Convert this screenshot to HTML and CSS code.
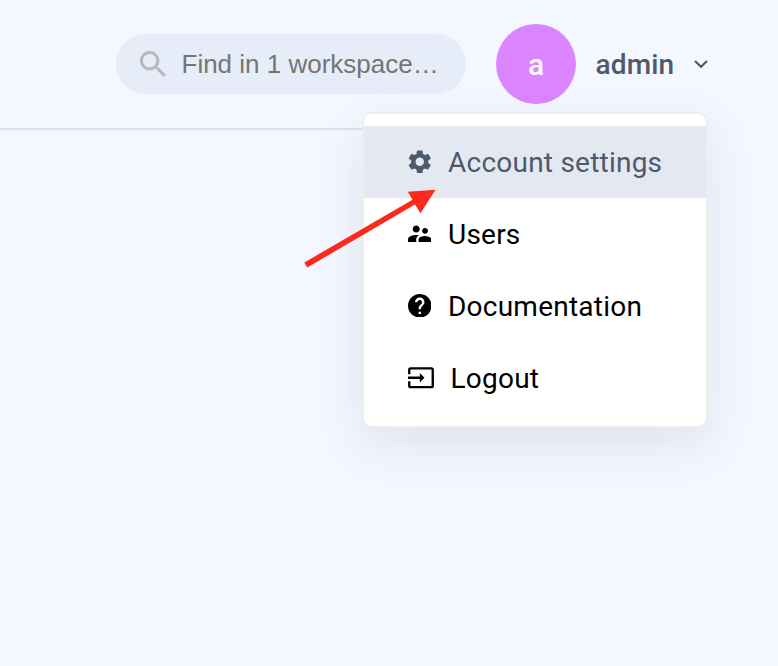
FILE: index.html
```html
<!DOCTYPE html>
<html lang="en">
<head>
<meta charset="utf-8">
<title>Workspace</title>
<link rel="stylesheet" href="styles.css">
</head>
<body>
<header class="topbar">
  <div class="search">
    <svg class="search-icon" viewBox="3 3 17.5 17.5"><path d="M15.5 14h-.79l-.28-.27C15.41 12.59 16 11.11 16 9.5 16 5.91 13.09 3 9.5 3S3 5.91 3 9.5 5.91 16 9.5 16c1.61 0 3.09-.59 4.23-1.57l.27.28v.79l5 4.99L20.49 19l-4.99-5zm-6 0C7.01 14 5 11.99 5 9.5S7.01 5 9.5 5 14 7.01 14 9.5 11.99 14 9.5 14z"/></svg>
    <span class="search-text">Find in 1 workspace…</span>
  </div>
  <div class="account">
    <div class="avatar"><span>a</span></div>
    <span class="name">admin</span>
    <svg class="chevron" viewBox="0 0 16 10"><path d="M2 2l6 5.800 6-5.800"/></svg>
    <nav class="menu">
      <a class="item active">
        <svg class="icon" viewBox="2 2 20 20"><path d="M19.140 12.940c.04-.3.06-.61.06-.94 0-.32-.02-.64-.07-.94l2.030-1.580c.18-.14.23-.41.12-.61l-1.920-3.320c-.12-.22-.37-.29-.59-.22l-2.390.96c-.5-.38-1.030-.7-1.620-.94L14.400 2.810c-.04-.24-.24-.41-.48-.41h-3.840c-.24 0-.43.17-.47.41L9.250 5.350C8.660 5.590 8.120 5.920 7.630 6.290L5.240 5.330c-.22-.08-.47 0-.59.22L2.740 8.870c-.12.21-.08.47.12.61l2.030 1.580c-.05.3-.09.63-.09.94s.02.64.07.94l-2.030 1.580c-.18.14-.23.41-.12.61l1.920 3.320c.12.22.37.29.59.22l2.390-.96c.5.38 1.030.7 1.620.94l.36 2.540c.05.24.24.41.48.41h3.840c.24 0 .44-.17.47-.41l.36-2.540c.59-.24 1.130-.56 1.620-.94l2.390.96c.22.08.47 0 .59-.22l1.920-3.320c.12-.22.07-.47-.12-.61l-2.010-1.580zM12 15.600c-1.980 0-3.600-1.620-3.600-3.600s1.620-3.600 3.600-3.600 3.600 1.620 3.600 3.600-1.620 3.600-3.600 3.600z"/></svg>
        <span>Account settings</span>
      </a>
      <a class="item">
        <svg class="icon" viewBox="2 2 20 20"><path d="M16.500 12c1.380 0 2.490-1.120 2.490-2.500S17.880 7 16.500 7 14 8.120 14 9.500s1.120 2.500 2.500 2.500zM9 11c1.660 0 2.990-1.340 2.990-3S10.660 5 9 5 6 6.340 6 8s1.340 3 3 3zm7.500 3c-1.830 0-5.500.92-5.500 2.750V19h11v-2.250c0-1.830-3.670-2.750-5.500-2.750zM9 13c-2.330 0-7 1.170-7 3.500V19h7v-2.250c0-.85.33-2.340 2.370-3.470C10.500 13.100 9.660 13 9 13z"/></svg>
        <span>Users</span>
      </a>
      <a class="item">
        <svg class="icon" viewBox="2 2 20 20"><path d="M12 2C6.480 2 2 6.480 2 12s4.480 10 10 10 10-4.480 10-10S17.520 2 12 2zm1 17h-2v-2h2v2zm2.070-7.750l-.9.920C13.450 12.900 13 13.500 13 15h-2v-.5c0-1.100.45-2.100 1.170-2.830l1.240-1.260c.37-.36.59-.86.59-1.410 0-1.100-.9-2-2-2s-2 .9-2 2H8c0-2.210 1.790-4 4-4s4 1.790 4 4c0 .88-.36 1.680-.93 2.250z"/></svg>
        <span>Documentation</span>
      </a>
      <a class="item">
        <svg class="icon icon-wide" viewBox="1 2 22 20"><path d="M21 3.010H3c-1.100 0-2 .9-2 2V9h2V4.990h18v14.030H3V15H1v4.010c0 1.100.9 1.980 2 1.980h18c1.100 0 2-.88 2-1.980v-14c0-1.110-.9-2-2-2zM11 16l4-4-4-4v3H1v2h10v3z"/></svg>
        <span>Logout</span>
      </a>
    </nav>
  </div>
</header>
<svg class="pointer" viewBox="0 0 140 86"><path d="M4.300 77.500L112.500 14.800l-4.700-8.100L135.500 4.800l-15 23.500-5.500-8.700L7.300 82.500z"/></svg>
</body>
</html>
```
FILE: styles.css
```css
* { box-sizing: border-box; }

body {
  margin: 0;
  min-height: 666px;
  background: #f4f7ff;
  font-family: Roboto, "Liberation Sans", sans-serif;
  overflow: hidden;
}

svg { display: block; flex: none; fill: currentColor; }

.topbar {
  display: flex;
  align-items: flex-start;
  justify-content: flex-end;
  gap: 30px;
  height: 130px;
  margin-right: 70px;
  padding-top: 24px;
  border-bottom: 2px solid #dde2ea;
}

.search {
  display: flex;
  align-items: center;
  gap: 16px;
  width: 350px;
  height: 60px;
  margin-top: 10px;
  padding-left: 23.5px;
  border-radius: 30px;
  background: #e6ecf8;
}

.search-icon { width: 26px; height: 26px; color: #b5bbbd; }

.search-text {
  padding-bottom: 1px;
  font: 26px/30px "Liberation Sans", Arial, sans-serif;
  color: #757575;
  white-space: nowrap;
}

.account {
  position: relative;
  display: flex;
  align-items: center;
  width: 212px;
  color: #4b5a6c;
}

.avatar {
  display: flex;
  align-items: center;
  justify-content: center;
  width: 80px;
  height: 80px;
  border-radius: 50%;
  background: #db85ff;
  color: #fff;
  font-size: 30px;
  font-weight: 500;
}

.name {
  margin-left: 19.5px;
  font-size: 28px;
  font-weight: 500;
  letter-spacing: 0.15px;
}

.chevron {
  width: 16px;
  height: 10px;
  margin-left: auto;
  margin-right: -1px;
  fill: none;
  stroke: currentColor;
  stroke-width: 2.2;
}

.menu {
  position: absolute;
  top: 88px;
  right: 0;
  width: 346px;
  height: 316px;
  padding: 12px 0;
  border: 2px solid #eee;
  border-radius: 10px;
  background: #fff;
  box-shadow: 0 16px 48px rgba(35, 45, 55, 0.1);
  color: #000;
}

.item {
  display: flex;
  align-items: center;
  gap: 17px;
  height: 72px;
  padding-left: 43.5px;
  font-size: 28px;
  letter-spacing: 0.23px;
  white-space: nowrap;
}

.item.active { background: #e4e8f0; color: #4b5a6c; }

.icon { width: 23.5px; height: 23.5px; margin-top: -1px; }
.icon-wide { width: 26px; }

/* Annotation arrow laid over the menu */
.pointer {
  position: absolute;
  left: 300px;
  top: 185px;
  width: 140px;
  height: 86px;
  color: #fc2a1c;
}
```
